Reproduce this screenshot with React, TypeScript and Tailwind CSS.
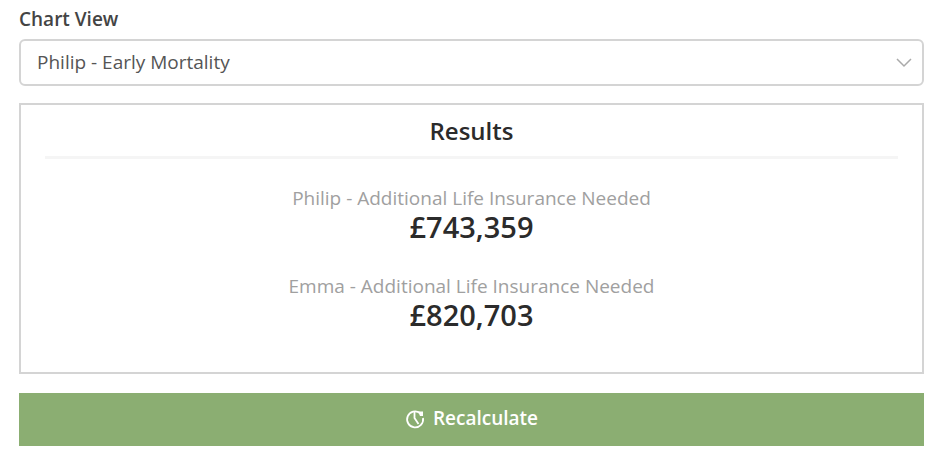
import React from 'react';

interface ResultItemProps {
  name: string;
  amount: number;
}

const chartViews = ['Philip - Early Mortality', 'Emma - Early Mortality'];

const results: ResultItemProps[] = [
  { name: 'Philip', amount: 743359 },
  { name: 'Emma', amount: 820703 },
];

const ResultItem: React.FC<ResultItemProps> = ({ name, amount }) => (
  <div className="text-center">
    <p className="text-[19px] leading-6 text-[#a0a0a0]">
      {name} - Additional Life Insurance Needed
    </p>
    <p className="text-[29px] leading-[34px] font-semibold text-[#2b2b2b]">
      £{amount.toLocaleString('en-GB')}
    </p>
  </div>
);

export default function App() {
  return (
    <main className="bg-white pt-[7px] pr-4 pb-4 pl-[19px] font-['Open_Sans','Noto_Sans',sans-serif] text-[#444444]">
      <label htmlFor="chart-view" className="block text-[19px] leading-6 font-semibold">
        Chart View
      </label>

      {/* Chart selector */}
      <div className="relative mt-2">
        <select
          id="chart-view"
          className="block h-[47px] w-full appearance-none rounded-md border-2 border-[#d4d4d4] bg-white pr-10 pl-4 text-[19px] text-[#555555]"
        >
          {chartViews.map((view) => (
            <option key={view}>{view}</option>
          ))}
        </select>
        <svg
          className="pointer-events-none absolute top-4 right-3 h-4 w-4"
          viewBox="0 0 16 16"
          fill="none"
          stroke="#aaaaaa"
          strokeWidth="1.5"
        >
          <path d="M1 4l7 7 7-7" />
        </svg>
      </div>

      {/* Results */}
      <section className="mt-[17px] border-2 border-[#d4d4d4] px-6 pt-3 pb-10">
        <h2 className="border-b-3 border-[#f5f5f5] pb-[11px] text-center text-[24px] leading-7 font-semibold text-[#2b2b2b]">
          Results
        </h2>
        <div className="mt-[27px] flex flex-col gap-[30px]">
          {results.map((result) => (
            <ResultItem key={result.name} {...result} />
          ))}
        </div>
      </section>

      <button
        type="button"
        className="mt-[19px] flex h-[53px] w-full items-center justify-center gap-2 bg-[#8bae72] pb-0.5 text-[19px] font-semibold text-white"
      >
        <svg className="h-5 w-5" viewBox="0 0 20 20" fill="none" stroke="currentColor" strokeWidth="1.8">
          <path d="M15 4A8 8 0 1 0 18 9" />
          <path d="M9.5 2v7l4 6" />
          <path d="M13 2.500h5v4.500h-3z" fill="currentColor" stroke="none" />
        </svg>
        Recalculate
      </button>
    </main>
  );
}
